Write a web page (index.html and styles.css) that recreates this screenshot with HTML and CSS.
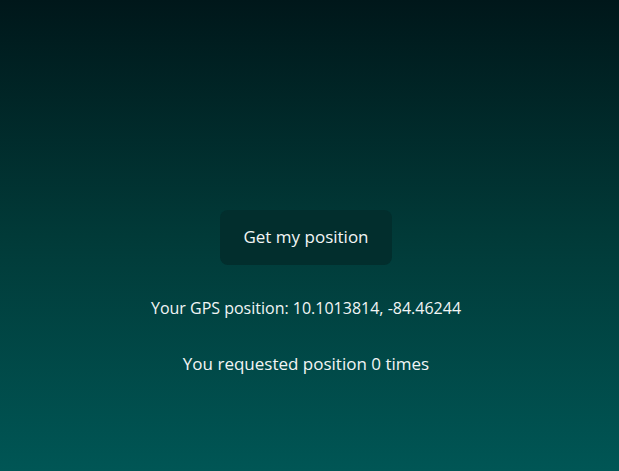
FILE: index.html
```html
<!DOCTYPE html>
<html lang="en">
<head>
<meta charset="utf-8">
<title>GPS</title>
<link rel="stylesheet" href="styles.css">
</head>
<body>
<main class="app">
  <button class="btn" type="button">Get my position</button>
  <p class="line line-coords">Your GPS position: 10.1013814, -84.46244</p>
  <p class="line">You requested position 0 times</p>
</main>
</body>
</html>
```

FILE: styles.css
```css
html, body {
  margin: 0;
  padding: 0;
}
body {
  min-height: 100vh;
  background: linear-gradient(180deg, #00171a 0%, #013a38 50%, #005655 100%);
  font-family: "Open Sans", "Liberation Sans", sans-serif;
  color: #f2f5f5;
  font-size: 17px;
}
.app {
  display: flex;
  flex-direction: column;
  align-items: center;
  padding: 210px 7px 0 0;
  gap: 32px;
}
.btn {
  font: inherit;
  color: #f2f5f5;
  background: #022e2d;
  border: none;
  border-radius: 8px;
  padding: 15px 23px 17px;
  line-height: 23px;
  height: 55px;
  margin-bottom: -1px;
}
.line {
  margin: 0;
  line-height: 24px;
}
.line-coords {
  font-size: 16px;
}
```
